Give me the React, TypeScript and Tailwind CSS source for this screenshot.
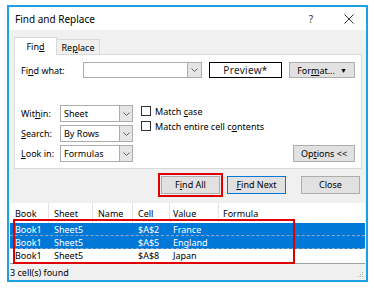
import React from 'react';

const Chevron = () => (
  <svg width="7" height="4" viewBox="0 0 7 4" className="block">
    <path d="M0.5 0.5 L3.5 3.5 L6.5 0.5" fill="none" stroke="#606060" strokeWidth="1" />
  </svg>
);

function Select({ value, w }: { value: string; w: string }) {
  return (
    <div className={`${w} h-[17px] flex border border-[#acacac] bg-white`}>
      <div className="flex-1 flex items-center pl-[3px] text-black">{value}</div>
      <div className="w-[13px] bg-[#e5e5e5] border-l border-[#acacac] flex items-center justify-center">
        <Chevron />
      </div>
    </div>
  );
}

function Check({ children }: { children: React.ReactNode }) {
  return (
    <div className="flex items-center gap-[4px] h-[12px]">
      <div className="w-[10px] h-[10px] border border-[#333] bg-white" />
      <span>{children}</span>
    </div>
  );
}

function Btn({ children, w, blue }: { children: React.ReactNode; w: string; blue?: boolean }) {
  return (
    <div
      className={`${w} h-[18px] flex items-center justify-center bg-[#e1e1e1] border ${
        blue ? 'border-[#0078d7]' : 'border-[#adadad]'
      }`}
    >
      {children}
    </div>
  );
}

const rows = [
  { book: 'Book1', sheet: 'Sheet5', cell: '$A$2', value: 'France', sel: true },
  { book: 'Book1', sheet: 'Sheet5', cell: '$A$5', value: 'England', sel: true },
  { book: 'Book1', sheet: 'Sheet5', cell: '$A$8', value: 'Japan', sel: false },
];

export default function App() {
  return (
    <div className="w-[374px] h-[290px] bg-white pt-[5px] pl-[7px] text-[9px] leading-none text-black font-['Segoe_UI','Noto_Sans',sans-serif]">
      {/* Dialog window */}
      <div className="w-[361px] h-[277px] border-2 border-[#1ba1e2] bg-[#f0f0f0] flex flex-col">
        {/* Title bar */}
        <div className="h-[23px] bg-white flex items-center pl-[6px] text-[10px]">
          <span>Find and Replace</span>
          <span className="ml-auto mr-[31px] text-[#333]">?</span>
          <svg width="10" height="10" viewBox="0 0 10 10" className="mr-[12px]">
            <path d="M0.5 0.5 L9.5 9.5 M9.5 0.5 L0.5 9.5" stroke="#333" strokeWidth="1" />
          </svg>
        </div>

        {/* Tabs */}
        <div className="flex items-end pl-[5px] pt-[6px] h-[24px]">
          <div className="w-[43px] h-[18px] bg-white border border-b-0 border-[#d9d9d9] flex items-center justify-center relative top-[1px]">
            Fin<u>d</u>
          </div>
          <div className="w-[43px] h-[15px] bg-[#f0f0f0] border border-b-0 border-l-0 border-[#d9d9d9] flex items-center justify-center">
            Re<u>p</u>lace
          </div>
        </div>

        {/* Tab panel */}
        <div className="ml-[5px] w-[348px] h-[115px] bg-white border border-[#d9d9d9] pl-[6px] pr-[6px] pt-[7px]">
          <div className="flex items-center h-[16px]">
            <span className="w-[62px]">Fi<u>n</u>d what:</span>
            <div className="w-[119px] h-[16px] flex border border-[#acacac] bg-white">
              <div className="flex-1" />
              <div className="w-[14px] bg-[#e5e5e5] border-l border-[#acacac] flex items-center justify-center">
                <Chevron />
              </div>
            </div>
            <div className="ml-[7px] w-[73px] h-[16px] border border-black flex items-center justify-center text-[10px] text-[#222] tracking-[0.3px]">
              Preview*
            </div>
            <div className="ml-[7px] w-[66px] h-[16px] bg-[#e1e1e1] border border-[#adadad] flex items-center justify-center gap-[5px]">
              <span>
                For<u>m</u>at...
              </span>
              <span className="text-[7px]">▼</span>
            </div>
          </div>

          <div className="flex mt-[27px]">
            <div className="flex flex-col gap-[3px]">
              <div className="flex items-center">
                <span className="w-[39px]">
                  Wit<u>h</u>in:
                </span>
                <Select value="Sheet" w="w-[73px]" />
              </div>
              <div className="flex items-center">
                <span className="w-[39px]">
                  <u>S</u>earch:
                </span>
                <Select value="By Rows" w="w-[73px]" />
              </div>
              <div className="flex items-center">
                <span className="w-[39px]">
                  <u>L</u>ook in:
                </span>
                <Select value="Formulas" w="w-[73px]" />
              </div>
            </div>
            <div className="ml-[8px] flex flex-col gap-[3px]">
              <Check>
                Match <u>c</u>ase
              </Check>
              <Check>
                Match entire cell c<u>o</u>ntents
              </Check>
            </div>
            <div className="ml-auto self-end">
              <div className="w-[62px] h-[17px] bg-[#e1e1e1] border border-[#adadad] flex items-center justify-center">
                Op<u>t</u>ions &lt;&lt;
              </div>
            </div>
          </div>
        </div>

        {/* Action buttons */}
        <div className="flex items-center h-[21px] mt-[5px] pl-[149px]">
          <div className="border-2 border-[#e00000] p-[1px]">
            <Btn w="w-[59px]">
              F<u>i</u>nd All
            </Btn>
          </div>
          <div className="ml-[4px]">
            <Btn w="w-[59px]" blue>
              <u>F</u>ind Next
            </Btn>
          </div>
          <div className="ml-[15px]">
            <Btn w="w-[59px]">Close</Btn>
          </div>
        </div>

        {/* Results list */}
        <div className="relative mt-[8px] ml-[1px] mr-[1px] bg-white border-b border-[#a0a0a0]">
          <div className="flex h-[20px] items-center text-[9px]">
            <div className="w-[39px] h-full flex items-center pl-[5px] border-r border-[#e5e5e5]">Book</div>
            <div className="w-[44px] h-full flex items-center pl-[5px] border-r border-[#e5e5e5]">Sheet</div>
            <div className="w-[40px] h-full flex items-center pl-[5px] border-r border-[#e5e5e5]">Name</div>
            <div className="w-[37px] h-full flex items-center pl-[5px] border-r border-[#e5e5e5]">Cell</div>
            <div className="w-[49px] h-full flex items-center pl-[3px] border-r border-[#e5e5e5]">Value</div>
            <div className="flex-1 h-full flex items-center pl-[4px]">Formula</div>
          </div>
          {rows.map((r, i) => (
            <div
              key={i}
              className={`flex h-[13px] items-center ${
                r.sel ? 'bg-[#0078d7] text-white border-b border-dashed border-[#8aa8c8]' : 'bg-white'
              }`}
            >
              <div className="w-[39px] pl-[5px]">{r.book}</div>
              <div className="w-[44px] pl-[5px]">{r.sheet}</div>
              <div className="w-[40px] pl-[5px]"></div>
              <div className="w-[37px] pl-[5px]">{r.cell}</div>
              <div className="w-[49px] pl-[3px]">{r.value}</div>
              <div className="flex-1"></div>
            </div>
          ))}
          <div className="h-[1px]" />
          {/* annotation box */}
          <div className="absolute left-[3px] top-[16px] w-[282px] h-[45px] border-2 border-[#e00000]" />
        </div>

        {/* Status bar */}
        <div className="flex-1 flex items-center pl-[1px] relative">
          <span>3 cell(s) found</span>
          <svg width="6" height="6" viewBox="0 0 6 6" className="ml-auto mr-[2px] self-end mb-[2px]">
            <rect x="4" y="0" width="1" height="1" fill="#b0b0b0" />
            <rect x="2" y="2" width="1" height="1" fill="#b0b0b0" />
            <rect x="4" y="2" width="1" height="1" fill="#b0b0b0" />
            <rect x="0" y="4" width="1" height="1" fill="#b0b0b0" />
            <rect x="2" y="4" width="1" height="1" fill="#b0b0b0" />
            <rect x="4" y="4" width="1" height="1" fill="#b0b0b0" />
          </svg>
        </div>
      </div>
    </div>
  );
}
